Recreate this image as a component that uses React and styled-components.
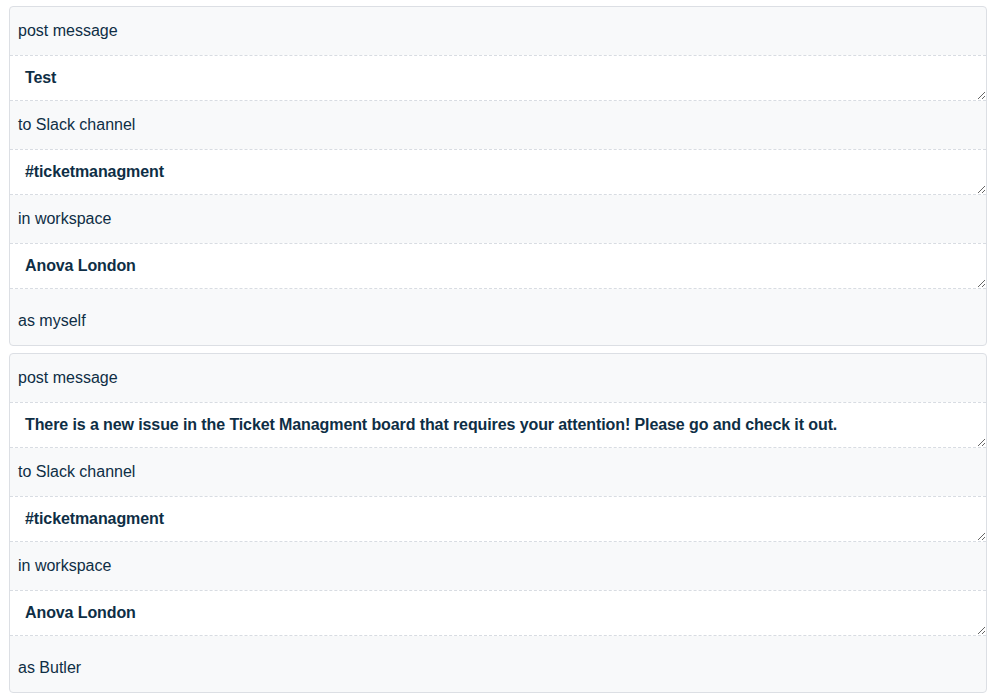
import React from "react";
import styled, { createGlobalStyle } from "styled-components";

const Global = createGlobalStyle`
  html, body { margin: 0; padding: 0; background: #ffffff; }
  body {
    font-family: "Liberation Sans", Arial, sans-serif;
    color: #0e2e45;
  }
`;

const Page = styled.div`
  padding: 6px 12px 0 9px;
  display: flex;
  flex-direction: column;
  gap: 7px;
`;

const Card = styled.div`
  border: 1px solid #dcdfe4;
  border-radius: 4px;
  background: #f8f9fa;
  display: flex;
  flex-direction: column;
`;

const Label = styled.div`
  font-size: 16px;
  line-height: 20px;
  color: #0e2e45;
  padding: ${(p) => (p.$last ? "22px 8px 14px" : "14px 8px")};
`;

const Field = styled.textarea`
  display: block;
  box-sizing: border-box;
  width: 100%;
  height: 46px;
  margin: 0;
  padding: 12px 15px;
  border: none;
  border-top: 1px dashed #d8dce2;
  border-bottom: 1px dashed #d8dce2;
  background: #ffffff;
  font-family: "Liberation Sans", Arial, sans-serif;
  font-weight: 700;
  font-size: 16px;
  line-height: 20px;
  letter-spacing: -0.1px;
  color: #0e2e45;
  resize: vertical;
  outline: none;
  overflow: hidden;
`;

const rules = [
  {
    message: "Test",
    channel: "#ticketmanagment",
    workspace: "Anova London",
    as: "as myself",
  },
  {
    message:
      "There is a new issue in the Ticket Managment board that requires your attention! Please go and check it out.",
    channel: "#ticketmanagment",
    workspace: "Anova London",
    as: "as Butler",
  },
];

function Rule({ rule }) {
  return (
    <Card>
      <Label>post message</Label>
      <Field readOnly defaultValue={rule.message} />
      <Label>to Slack channel</Label>
      <Field readOnly defaultValue={rule.channel} />
      <Label>in workspace</Label>
      <Field readOnly defaultValue={rule.workspace} />
      <Label $last>{rule.as}</Label>
    </Card>
  );
}

export default function App() {
  return (
    <>
      <Global />
      <Page>
        {rules.map((r, i) => (
          <Rule key={i} rule={r} />
        ))}
      </Page>
    </>
  );
}
